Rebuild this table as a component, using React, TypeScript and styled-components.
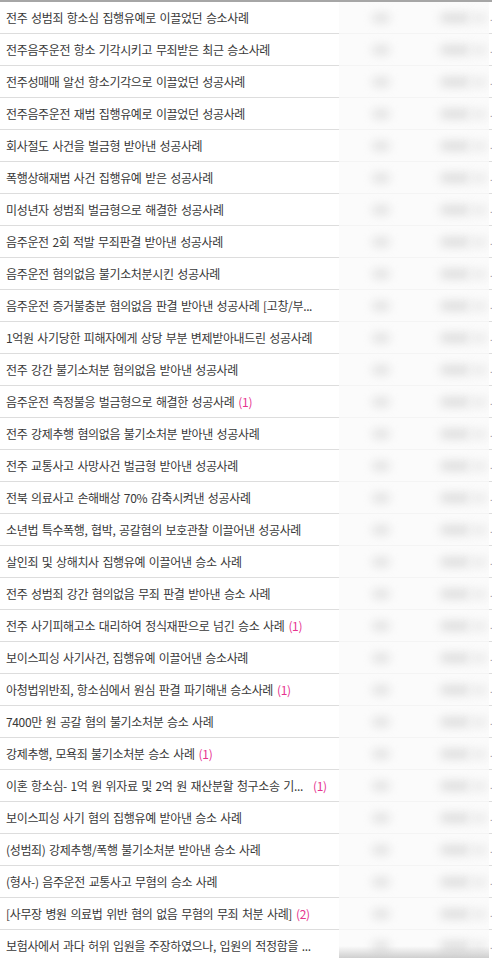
import React from "react";
import styled, { createGlobalStyle } from "styled-components";

const Global = createGlobalStyle`
  html, body { margin: 0; padding: 0; background: #fff; }
  body { font-family: "Noto Sans CJK KR", "Noto Sans", sans-serif; }
`;

type Item = { title: string; count?: number };

const items: Item[] = [
  { title: "전주 성범죄 항소심 집행유예로 이끌었던 승소사례" },
  { title: "전주음주운전 항소 기각시키고 무죄받은 최근 승소사례" },
  { title: "전주성매매 알선 항소기각으로 이끌었던 성공사례" },
  { title: "전주음주운전 재범 집행유예로 이끌었던 성공사례" },
  { title: "회사절도 사건을 벌금형 받아낸 성공사례" },
  { title: "폭행상해재범 사건 집행유예 받은 성공사례" },
  { title: "미성년자 성범죄 벌금형으로 해결한 성공사례" },
  { title: "음주운전 2회 적발 무죄판결 받아낸 성공사례" },
  { title: "음주운전 혐의없음 불기소처분시킨 성공사례" },
  { title: "음주운전 증거불충분 혐의없음 판결 받아낸 성공사례 [고창/부..." },
  { title: "1억원 사기당한 피해자에게 상당 부분 변제받아내드린 성공사례" },
  { title: "전주 강간 불기소처분 혐의없음 받아낸 성공사례" },
  { title: "음주운전 측정불응 벌금형으로 해결한 성공사례", count: 1 },
  { title: "전주 강제추행 혐의없음 불기소처분 받아낸 성공사례" },
  { title: "전주 교통사고 사망사건 벌금형 받아낸 성공사례" },
  { title: "전북 의료사고 손해배상 70% 감축시켜낸 성공사례" },
  { title: "소년법 특수폭행, 협박, 공갈혐의 보호관찰 이끌어낸 성공사례" },
  { title: "살인죄 및 상해치사 집행유예 이끌어낸 승소 사례" },
  { title: "전주 성범죄 강간 혐의없음 무죄 판결 받아낸 승소 사례" },
  { title: "전주 사기피해고소 대리하여 정식재판으로 넘긴 승소 사례", count: 1 },
  { title: "보이스피싱 사기사건, 집행유예 이끌어낸 승소사례" },
  { title: "아청법위반죄, 항소심에서 원심 판결 파기해낸 승소사례", count: 1 },
  { title: "7400만 원 공갈 혐의 불기소처분 승소 사례" },
  { title: "강제추행, 모욕죄 불기소처분 승소 사례", count: 1 },
  { title: "이혼 항소심- 1억 원 위자료 및 2억 원 재산분할 청구소송 기...", count: 1 },
  { title: "보이스피싱 사기 혐의 집행유예 받아낸 승소 사례" },
  { title: "(성범죄) 강제추행/폭행 불기소처분 받아낸 승소 사례" },
  { title: "(형사-) 음주운전 교통사고 무혐의 승소 사례" },
  { title: "[사무장 병원 의료법 위반 혐의 없음 무혐의 무죄 처분 사례]", count: 2 },
  { title: "보험사에서 과다 허위 입원을 주장하였으나, 입원의 적정함을 ..." },
];

const Board = styled.div`
  width: 492px;
  border-top: 2px solid #a6a6a6;
  position: relative;
`;

const Row = styled.div`
  display: grid;
  grid-template-columns: 339px 150px 1fr;
  height: 32px;
`;

const TitleCell = styled.div`
  display: flex;
  align-items: center;
  padding-left: 6px;
  border-bottom: 1px solid #dddddd;
  font-size: 12px;
  letter-spacing: -0.35px;
  word-spacing: 1.3px;
  color: #383838;
  white-space: nowrap;
  overflow: hidden;
`;

const Count = styled.span<{ $gap: number }>`
  color: #e6338f;
  margin-left: ${(p) => p.$gap}px;
`;

const BlurCell = styled.div`
  display: flex;
  align-items: center;
  background: #fbfbfb;
  border-bottom: 1px solid #f4f4f4;
  overflow: hidden;
`;

const Blob = styled.span<{ $w: number; $ml: number; $shade: string }>`
  display: block;
  width: ${(p) => p.$w}px;
  height: 10px;
  margin-left: ${(p) => p.$ml}px;
  background: ${(p) => p.$shade};
  border-radius: 5px;
  filter: blur(5px);
`;

const EdgeCell = styled.div`
  display: flex;
  align-items: center;
  border-bottom: 1px solid #dddddd;
  font-size: 9px;
  color: #999;
  overflow: hidden;
  padding-left: 1px;
`;

const BottomShade = styled.div`
  position: absolute;
  left: 339px;
  width: 150px;
  top: 944px;
  height: 16px;
  background: linear-gradient(to bottom, rgba(200,200,200,0) 0%, rgba(160,160,160,0.65) 100%);
  pointer-events: none;
`;

export default function App() {
  return (
    <>
      <Global />
      <Board>
        {items.map((it, i) => (
          <Row key={i}>
            <TitleCell>
              {it.title}
              {it.count !== undefined && (
                <Count $gap={i === 24 ? 10 : 4}>({it.count})</Count>
              )}
            </TitleCell>
            <BlurCell>
              <Blob $w={18} $ml={33} $shade="#e2e2e2" />
              <Blob $w={30} $ml={50} $shade="#dedede" />
              <Blob $w={18} $ml={0} $shade="#ebebeb" />
            </BlurCell>
            <EdgeCell>.</EdgeCell>
          </Row>
        ))}
        <BottomShade />
      </Board>
    </>
  );
}
